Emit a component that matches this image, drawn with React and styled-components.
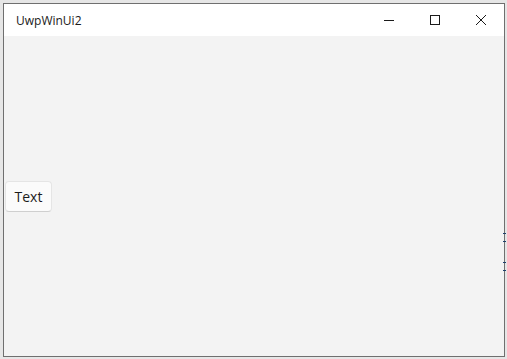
import React from 'react';
import styled, { createGlobalStyle } from 'styled-components';

const GlobalStyle = createGlobalStyle`
  html, body {
    margin: 0;
    padding: 0;
    background: #e6e6e6;
    font-family: "Segoe UI", "Open Sans", "Noto Sans", sans-serif;
  }
  #root {
    padding: 3px 2px 2px 3px;
  }
`;

const Window = styled.div`
  position: relative;
  width: 502px;
  height: 354px;
  box-sizing: border-box;
  border: 1px solid #6f6f6f;
  background: #f3f3f3;
  display: flex;
  flex-direction: column;
`;

const TitleBar = styled.div`
  height: 32px;
  background: #ffffff;
  display: flex;
  align-items: center;
  flex-shrink: 0;
`;

const Title = styled.div`
  flex: 1;
  padding-left: 12px;
  font-size: 12px;
  color: #1a1a1a;
  font-family: "Open Sans", "Noto Sans", sans-serif;
`;

const CaptionButton = styled.div`
  width: 46px;
  height: 32px;
  display: flex;
  align-items: center;
  justify-content: center;
  color: #1a1a1a;
`;

const Content = styled.div`
  flex: 1;
  display: flex;
  align-items: center;
  padding-left: 1px;
`;

const TextButton = styled.button`
  height: 31px;
  width: 47px;
  padding: 0;
  font-family: "Open Sans", "Noto Sans", sans-serif;
  font-size: 14px;
  color: #1b1b1b;
  background: #fbfbfb;
  border: 1px solid #e5e5e5;
  border-bottom-color: #cfcfcf;
  border-radius: 4px;
`;

const Tick = styled.div`
  position: absolute;
  right: -2px;
  top: ${(p) => p.top}px;
  width: 3px;
  height: 1px;
  background: #1f3f6a;
`;

const Minimize = () => (
  <svg width="10" height="10" viewBox="0 0 10 10">
    <path d="M0 5.5h10" stroke="currentColor" strokeWidth="1" />
  </svg>
);

const Maximize = () => (
  <svg width="10" height="10" viewBox="0 0 10 10">
    <rect x="0.5" y="0.5" width="9" height="9" fill="none" stroke="currentColor" strokeWidth="1" />
  </svg>
);

const Close = () => (
  <svg width="10" height="10" viewBox="0 0 10 10">
    <path d="M0 0L10 10M10 0L0 10" stroke="currentColor" strokeWidth="1" />
  </svg>
);

const App = () => (
  <>
    <GlobalStyle />
    <Window>
      <TitleBar>
        <Title>UwpWinUi2</Title>
        <CaptionButton><Minimize /></CaptionButton>
        <CaptionButton><Maximize /></CaptionButton>
        <CaptionButton><Close /></CaptionButton>
      </TitleBar>
      <Content>
        <TextButton>Text</TextButton>
      </Content>
      <Tick top={229} />
      <Tick top={237} />
      <Tick top={258} />
      <Tick top={266} />
    </Window>
  </>
);

export default App;
